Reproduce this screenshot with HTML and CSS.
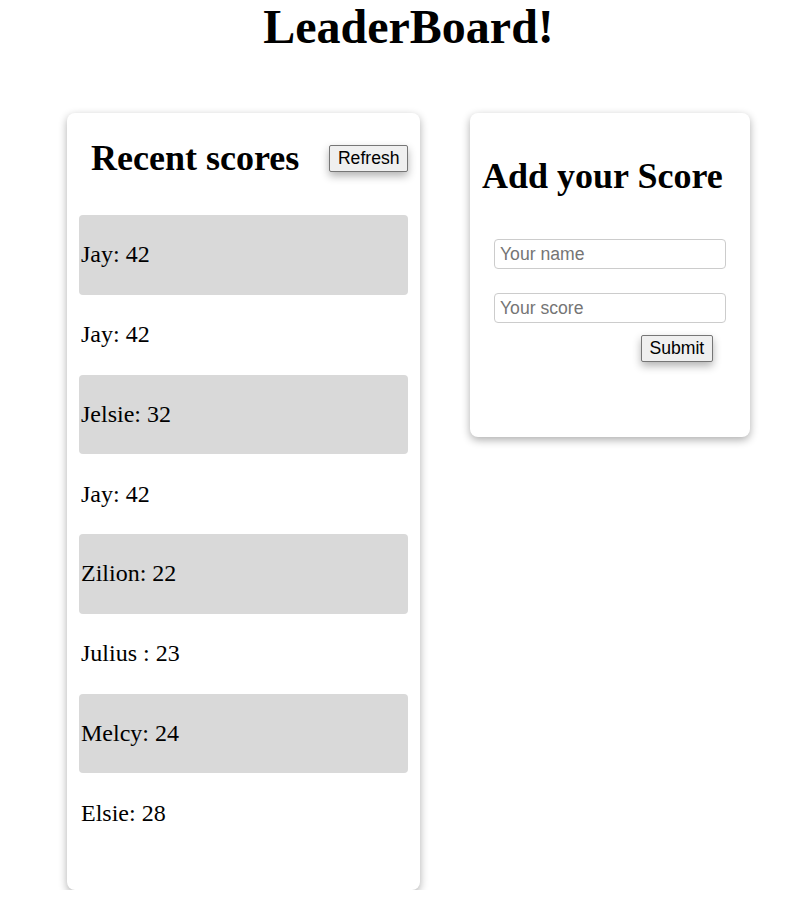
FILE: index.html
```html
<!DOCTYPE html>
<html lang="en">
<head>
<meta charset="utf-8">
<title>LeaderBoard</title>
<link rel="stylesheet" href="styles.css">
</head>
<body>
<div class="page">
  <h1 class="title">LeaderBoard!</h1>
  <main class="board">
    <section class="card scores">
      <div class="scores-head">
        <h2 class="card-title">Recent scores</h2>
        <button class="btn" type="button">Refresh</button>
      </div>
      <ul class="score-list">
        <li class="score">Jay: 42</li>
        <li class="score">Jay: 42</li>
        <li class="score">Jelsie: 32</li>
        <li class="score">Jay: 42</li>
        <li class="score">Zilion: 22</li>
        <li class="score">Julius : 23</li>
        <li class="score">Melcy: 24</li>
        <li class="score">Elsie: 28</li>
      </ul>
    </section>
    <section class="card add">
      <h2 class="card-title">Add your Score</h2>
      <form class="add-form">
        <input class="field" type="text" placeholder="Your name">
        <input class="field" type="text" placeholder="Your score">
        <button class="btn submit" type="button">Submit</button>
      </form>
    </section>
  </main>
</div>
</body>
</html>
```

FILE: styles.css
```css
* { box-sizing: border-box; }

body {
  margin: 0;
  font-family: "Liberation Serif", "Times New Roman", serif;
  color: #000;
  background: #fff;
}

.page {
  padding-left: 20px;
}

.title {
  margin: 0;
  font-size: 48px;
  font-weight: bold;
  text-align: center;
  line-height: 53px;
}

.board {
  display: flex;
  justify-content: center;
  align-items: flex-start;
  gap: 50px;
  margin-top: 60px;
}

.card {
  background: #fff;
  border-radius: 8px;
  box-shadow: 0 3px 8px rgba(0, 0, 0, 0.32);
}

.card-title {
  margin: 0;
  font-size: 36px;
  font-weight: bold;
  line-height: 40px;
}

.scores {
  width: 353px;
  padding: 25px 12px 37px;
}

.scores-head {
  display: flex;
  align-items: center;
  justify-content: space-between;
}

.scores-head .card-title {
  padding-left: 12px;
}

.btn {
  font-family: "Liberation Sans", Arial, sans-serif;
  font-size: 17.6px;
  line-height: 21px;
  padding: 2px 7.5px;
  color: #000;
  background: #efefef;
  border: 1px solid #767676;
  border-radius: 2px;
  box-shadow: 0 4px 8px rgba(0, 0, 0, 0.3);
}

.score-list {
  list-style: none;
  margin: 37px 0 0;
  padding: 0;
}

.score {
  height: 79.75px;
  display: flex;
  align-items: center;
  padding-left: 2px;
  font-size: 24px;
  border-radius: 4px;
}

.score:nth-child(odd) {
  background: #d9d9d9;
}

.add {
  width: 280px;
  padding: 43px 12px 75px 12px;
}

.add-form {
  display: flex;
  flex-direction: column;
  margin-top: 43px;
  padding-left: 12px;
}

.field {
  width: 232px;
  height: 30px;
  padding: 0 5px;
  font-family: "Liberation Sans", Arial, sans-serif;
  font-size: 17.6px;
  border: 1px solid #ccc;
  border-radius: 4px;
  margin: 0 0 24px;
}

.field:nth-of-type(2) {
  margin-bottom: 12px;
}

.field::placeholder {
  color: #757575;
}

.submit {
  align-self: flex-start;
  margin-left: 147px;
}
```
